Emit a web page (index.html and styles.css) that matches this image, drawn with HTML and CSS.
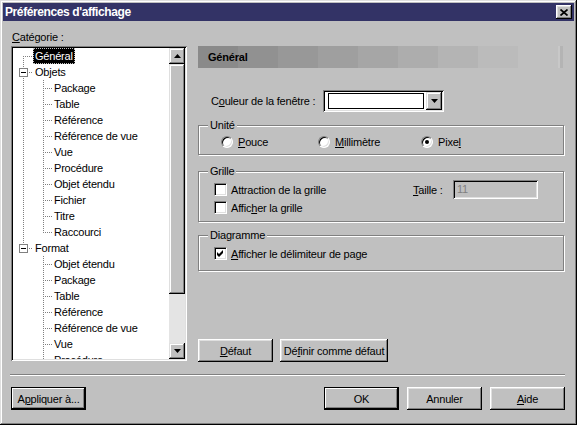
FILE: index.html
```html
<!DOCTYPE html>
<html lang="fr">
<head>
    <meta charset="UTF-8">
    <meta name="viewport" content="width=device-width, initial-scale=1.0">
    <title>Préférences d'affichage</title>
    <link rel="stylesheet" href="styles.css">
</head>
<body>

    <div class="window">
        <div class="titlebar">
            <span class="title">Préférences d'affichage</span>
            <span class="close">
                <svg width="8" height="7" viewBox="0 0 8 7"><path d="M0.5 0.5 L7.5 6.5 M7.5 0.5 L0.5 6.5" stroke="#000" stroke-width="1.7"/></svg>
            </span>
        </div>

        <div class="main">
            <div class="left">
                <div class="cat-label"><u>C</u>atégorie :</div>
                <div class="tree">
                    <div class="tree-list">
                        <div class="node root first"><span class="label sel">Général</span></div>
                        <div class="node root mid"><span class="toggle"></span><span class="label">Objets</span></div>
                        <div class="node child thru">Package</div>
                        <div class="node child thru">Table</div>
                        <div class="node child thru">Référence</div>
                        <div class="node child thru">Référence de vue</div>
                        <div class="node child thru">Vue</div>
                        <div class="node child thru">Procédure</div>
                        <div class="node child thru">Objet étendu</div>
                        <div class="node child thru">Fichier</div>
                        <div class="node child thru">Titre</div>
                        <div class="node child thru end">Raccourci</div>
                        <div class="node root last"><span class="toggle"></span><span class="label">Format</span></div>
                        <div class="node child">Objet étendu</div>
                        <div class="node child">Package</div>
                        <div class="node child">Table</div>
                        <div class="node child">Référence</div>
                        <div class="node child">Référence de vue</div>
                        <div class="node child">Vue</div>
                        <div class="node child">Procédure</div>
                    </div>
                    <div class="scrollbar">
                        <div class="sb-btn"><svg width="7" height="4" viewBox="0 0 7 4"><polygon points="3.5,0 7,4 0,4" fill="#000"/></svg></div>
                        <div class="sb-thumb"></div>
                        <div class="sb-track"></div>
                        <div class="sb-btn"><svg width="7" height="4" viewBox="0 0 7 4"><polygon points="0,0 7,0 3.5,4" fill="#000"/></svg></div>
                    </div>
                </div>
            </div>

            <div class="right">
                <div class="header">Général</div>

                <div class="color-row">
                    <span class="color-label">C<u>o</u>uleur de la fenêtre :</span>
                    <div class="combo">
                        <div class="swatch"></div>
                        <div class="combo-btn"><svg width="7" height="4" viewBox="0 0 7 4"><polygon points="0,0 7,0 3.5,4" fill="#000"/></svg></div>
                    </div>
                </div>

                <div class="group unite">
                    <div class="group-title">Unité</div>
                    <div class="radios">
                        <label class="radio-item w1"><span class="radio"></span><span><u>P</u>ouce</span></label>
                        <label class="radio-item w2"><span class="radio"></span><span><u>M</u>illimètre</span></label>
                        <label class="radio-item"><span class="radio checked"></span><span>Pixe<u>l</u></span></label>
                    </div>
                </div>

                <div class="group grille">
                    <div class="group-title">Grille</div>
                    <div class="grille-row">
                        <label class="check-item wide"><span class="check"></span><span>Attraction de la grille</span></label>
                        <span class="taille-label"><u>T</u>aille :</span>
                        <div class="taille-input">11</div>
                    </div>
                    <div class="check-row">
                        <label class="check-item"><span class="check"></span><span>Affic<u>h</u>er la grille</span></label>
                    </div>
                </div>

                <div class="group diagramme">
                    <div class="group-title">Diagramme</div>
                    <div class="check-row">
                        <label class="check-item">
                            <span class="check">
                                <svg width="7" height="7" viewBox="0 0 7 7"><path d="M0 2 L2 4 L6 0 L6 3 L2 7 L0 5 Z" fill="#000"/></svg>
                            </span>
                            <span><u>A</u>fficher le délimiteur de page</span>
                        </label>
                    </div>
                </div>

                <div class="panel-buttons">
                    <button class="button btn-defaut"><u>D</u>éfaut</button>
                    <button class="button btn-definir">Dé<u>f</u>inir comme défaut</button>
                </div>
            </div>
        </div>

        <div class="separator"></div>

        <div class="bottom">
            <button class="button default apply">A<u>p</u>pliquer à...</button>
            <button class="button default">OK</button>
            <button class="button">Annuler</button>
            <button class="button"><u>A</u>ide</button>
        </div>
    </div>

</body>
</html>
```

FILE: styles.css
```css
body {
    margin: 0;
    font-family: "Liberation Sans", Arial, sans-serif;
    font-size: 11px;
    letter-spacing: -0.2px;
    color: #000;
    background-color: #c0c0c0;
}
u {
    text-decoration-thickness: 1px;
    text-underline-offset: 1px;
}
.window {
    width: 577px;
    height: 425px;
    box-sizing: border-box;
    padding: 3px;
    background-color: #c0c0c0;
    box-shadow: inset -1px -1px #000, inset 1px 1px #dfdfdf, inset -2px -2px #808080, inset 2px 2px #fff;
    overflow: hidden;
}
.titlebar {
    height: 18px;
    background-color: #333366;
    display: flex;
    align-items: center;
    justify-content: space-between;
    padding: 0 2px 0 2px;
}
.title {
    color: #fff;
    font-weight: bold;
    font-size: 12px;
    letter-spacing: -0.4px;
}
.close {
    width: 16px;
    height: 14px;
    box-sizing: border-box;
    display: flex;
    align-items: center;
    justify-content: center;
    background-color: #c0c0c0;
    box-shadow: inset -1px -1px #000, inset 1px 1px #fff, inset -2px -2px #808080, inset 2px 2px #dfdfdf;
}
.main {
    display: flex;
    align-items: flex-start;
    padding: 8px 0 0 8px;
    gap: 11px;
}
.left {
    width: 176px;
}
.cat-label {
    height: 17px;
    line-height: 17px;
    padding-left: 1px;
}
.tree {
    height: 315px;
    box-sizing: border-box;
    padding: 2px;
    display: flex;
    background-color: #fff;
    box-shadow: inset 1px 1px #808080, inset -1px -1px #fff, inset 2px 2px #000, inset -2px -2px #dfdfdf;
}
.tree-list {
    flex: 1;
    overflow: hidden;
    background-color: #fff;
}
.node {
    position: relative;
    height: 16px;
    line-height: 16px;
    padding-left: 20px;
    white-space: nowrap;
}
.node .label {
    display: inline-block;
    height: 16px;
    padding: 0 2px;
}
.node .sel {
    background-color: #000;
    color: #fff;
    outline: 1px dotted #c0c0c0;
    outline-offset: -1px;
}
.node::before {
    content: "";
    position: absolute;
    left: 10px;
    top: 8px;
    width: 10px;
    height: 1px;
    background: repeating-linear-gradient(90deg, #808080 0 1px, transparent 1px 2px);
}
.node::after {
    content: "";
    position: absolute;
    left: 10px;
    top: 0;
    width: 1px;
    height: 16px;
    background: repeating-linear-gradient(180deg, #808080 0 1px, transparent 1px 2px);
}
.node.first::after {
    top: 8px;
    height: 8px;
}
.node.last::after {
    height: 9px;
}
.node.child {
    padding-left: 41px;
}
.node.child::before {
    left: 30px;
    width: 9px;
}
.node.child::after {
    left: 30px;
}
.node.child.end::after {
    height: 9px;
}
.node.thru {
    background: repeating-linear-gradient(180deg, #808080 0 1px, transparent 1px 2px) 10px 0 / 1px 100% no-repeat;
}
.toggle {
    position: absolute;
    left: 6px;
    top: 4px;
    width: 9px;
    height: 9px;
    box-sizing: border-box;
    border: 1px solid #808080;
    background-color: #fff;
    z-index: 1;
}
.toggle::before {
    content: "";
    position: absolute;
    left: 1px;
    top: 3px;
    width: 5px;
    height: 1px;
    background-color: #000;
}
.scrollbar {
    width: 16px;
    display: flex;
    flex-direction: column;
}
.sb-btn, .combo-btn {
    width: 16px;
    height: 16px;
    box-sizing: border-box;
    display: flex;
    align-items: center;
    justify-content: center;
    background-color: #c0c0c0;
    box-shadow: inset -1px -1px #000, inset 1px 1px #dfdfdf, inset -2px -2px #808080, inset 2px 2px #fff;
}
.sb-thumb {
    height: 230px;
    background-color: #c0c0c0;
    box-shadow: inset -1px -1px #000, inset 1px 1px #dfdfdf, inset -2px -2px #808080, inset 2px 2px #fff;
}
.sb-track {
    flex: 1;
    background-color: #e4e4e4;
}
.right {
    width: 366px;
    height: 316px;
    margin-top: 17px;
    display: flex;
    flex-direction: column;
}
.header {
    height: 22px;
    line-height: 22px;
    padding-left: 10px;
    font-weight: bold;
    background:
        linear-gradient(90deg, #c8c8c8 0 50%, #b4b4b4 50%) right 1px top 0 / 5px 100% no-repeat,
        linear-gradient(90deg,
            #8a8a8a 0 40px, #919191 40px 80px, #989898 80px 120px, #9f9f9f 120px 160px,
            #a6a6a6 160px 200px, #adadad 200px 240px, #b4b4b4 240px 280px, #bbbbbb 280px 320px,
            transparent 320px) 0 0 / 100% 100% no-repeat;
}
.color-row {
    display: flex;
    align-items: center;
    height: 22px;
    margin-top: 22px;
    padding-left: 13px;
}
.color-label {
    width: 112px;
}
.combo {
    width: 121px;
    height: 22px;
    box-sizing: border-box;
    padding: 2px;
    display: flex;
    background-color: #fff;
    box-shadow: inset 1px 1px #808080, inset -1px -1px #fff, inset 2px 2px #000, inset -2px -2px #dfdfdf;
}
.swatch {
    width: 96px;
    height: 16px;
    box-sizing: border-box;
    margin: 1px 0 0 3px;
    border: 1px solid #000;
    background-color: #fff;
}
.combo-btn {
    margin-left: auto;
    height: 18px;
}
.group {
    box-sizing: border-box;
    border: 1px solid #808080;
    box-shadow: inset 1px 1px #fff, 1px 1px #fff;
}
.group-title {
    display: table;
    margin: -7px 0 0 9px;
    padding: 0 2px;
    line-height: 13px;
    background-color: #c0c0c0;
}
.unite {
    height: 30px;
    margin-top: 13px;
}
.grille {
    height: 51px;
    margin-top: 16px;
}
.diagramme {
    height: 36px;
    margin-top: 13px;
}
.radios {
    display: flex;
    align-items: center;
    height: 13px;
    margin-top: 3px;
    padding-left: 22px;
}
.radio-item {
    display: flex;
    align-items: center;
    gap: 5px;
}
.w1 {
    width: 97px;
}
.w2 {
    width: 103px;
}
.radio {
    position: relative;
    width: 12px;
    height: 12px;
    box-sizing: border-box;
    border-radius: 50%;
    border: 1px solid;
    border-color: #808080 #fff #fff #808080;
    background-color: #fff;
    box-shadow: inset 1px 1px #000, inset -1px -1px #dfdfdf;
}
.radio.checked::after {
    content: "";
    position: absolute;
    left: 3px;
    top: 3px;
    width: 4px;
    height: 4px;
    border-radius: 50%;
    background-color: #000;
}
.grille-row {
    display: flex;
    align-items: center;
    height: 19px;
    margin-top: 2px;
    padding-left: 15px;
}
.check-row {
    display: flex;
    align-items: center;
    height: 13px;
    margin-top: 2px;
    padding-left: 15px;
}
.diagramme .check-row {
    margin-top: 5px;
}
.check-item {
    display: flex;
    align-items: center;
    gap: 4px;
}
.check-item.wide {
    width: 199px;
}
.check {
    width: 13px;
    height: 13px;
    box-sizing: border-box;
    display: flex;
    align-items: center;
    justify-content: center;
    border: 1px solid;
    border-color: #808080 #fff #fff #808080;
    background-color: #fff;
    box-shadow: inset 1px 1px #000, inset -1px -1px #dfdfdf;
}
.taille-label {
    width: 40px;
}
.taille-input {
    width: 85px;
    height: 19px;
    box-sizing: border-box;
    padding-left: 4px;
    line-height: 19px;
    color: #808080;
    background-color: #c0c0c0;
    box-shadow: inset 1px 1px #808080, inset -1px -1px #fff, inset 2px 2px #000, inset -2px -2px #dfdfdf;
}
.panel-buttons {
    display: flex;
    gap: 7px;
    margin-top: auto;
}
.button {
    height: 23px;
    width: 75px;
    padding: 0;
    border: none;
    font-family: "Liberation Sans", Arial, sans-serif;
    font-size: 11px;
    letter-spacing: -0.2px;
    color: #000;
    background-color: #c0c0c0;
    box-shadow: inset -1px -1px #000, inset 1px 1px #fff, inset -2px -2px #808080, inset 2px 2px #dfdfdf;
}
.button.default {
    box-shadow: inset 0 0 0 1px #000, inset -2px -2px #000, inset 2px 2px #fff, inset -3px -3px #808080;
}
.btn-definir {
    width: 108px;
}
.separator {
    margin: 12px 9px 0 7px;
    border-top: 1px solid #808080;
    border-bottom: 1px solid #fff;
}
.bottom {
    display: flex;
    gap: 8px;
    margin-top: 11px;
    padding: 0 9px 0 8px;
}
.apply {
    margin-right: auto;
}
```
